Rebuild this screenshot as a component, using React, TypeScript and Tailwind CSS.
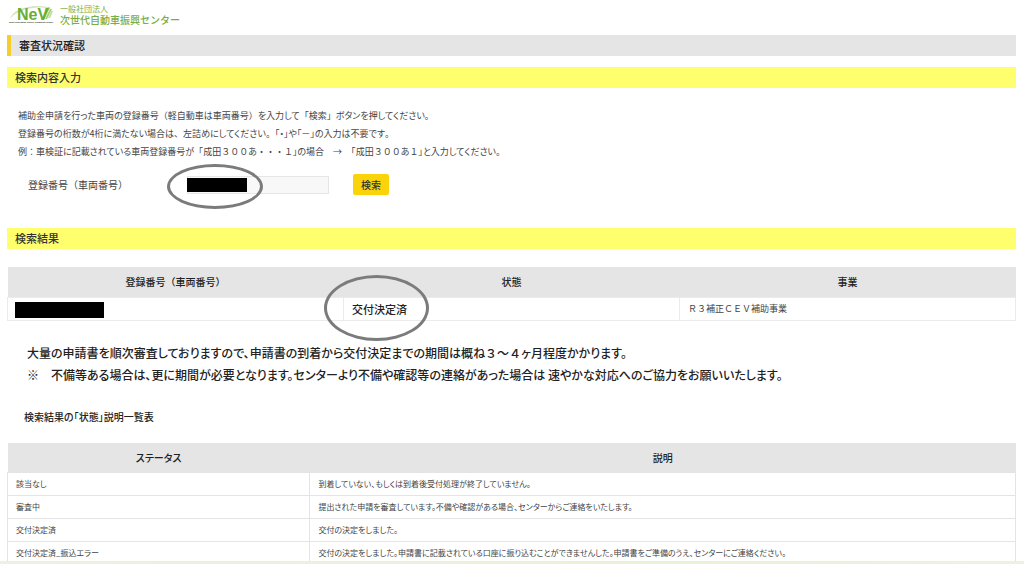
import { ReactNode } from 'react';
import { clsx } from 'clsx';

const results = [{ id: 1, status: '交付決定済', project: 'Ｒ３補正ＣＥＶ補助事業' }];

const statuses = [
    { name: '該当なし', description: '到着していない、もしくは到着後受付処理が終了していません。' },
    { name: '審査中', description: '提出された申請を審査しています。不備や確認がある場合、センターからご連絡をいたします。' },
    { name: '交付決定済', description: '交付の決定をしました。' },
    {
        name: '交付決定済_振込エラー',
        description: '交付の決定をしました。申請書に記載されている口座に振り込むことができませんした。申請書をご準備のうえ、センターにご連絡ください。',
    },
];

// Full-width digits and punctuation keep their full advance
function Wide({ children }: { children: ReactNode }) {
    return <span className="[font-feature-settings:normal]">{children}</span>;
}

function Logo() {
    return (
        <svg viewBox="0 0 48 20" className="h-5 w-12" aria-hidden="true">
            <path d="M2 15 C4 7 16 2 30 2 C36 2 41 3 44 5 C36 3 27 3 20 5 C11 7 6 10 2 15 Z" fill="#d3e6b8" />
            <path d="M33 15.5 L40 3.5 L42 3.5 L36 15.5 Z" fill="#8cbf3f" />
            <path d="M37 15 L42 5 L44 5 L39 15 Z" fill="#a5ce6e" />
            <path d="M40 14 L43.5 6.5 L45 7.5 L42 14 Z" fill="#c3df9d" />
            <text
                x="9"
                y="15.5"
                fontSize="16"
                fontWeight="700"
                fontFamily="Liberation Sans, sans-serif"
                fill="#68ad35"
            >
                NeV
            </text>
            <text x="1" y="19" fontSize="2.2" fontWeight="700" fontFamily="Liberation Sans, sans-serif" fill="#1c2a14">
                Next Generation Vehicle Promotion Center
            </text>
        </svg>
    );
}

function Ring({ className }: { className?: string }) {
    return (
        <span
            aria-hidden="true"
            className={clsx('pointer-events-none absolute z-10 rounded-[50%] border-[3px] border-[#7b7b7b]', className)}
        />
    );
}

function SectionTitle({ children }: { children: ReactNode }) {
    return (
        <h2 className="bg-[#ffff6e] px-2 text-[11px] leading-[21px] font-medium text-[#333]">{children}</h2>
    );
}

export default function App() {
    return (
        <div className="flex h-screen flex-col overflow-hidden bg-white font-['Noto_Sans_CJK_JP',sans-serif] text-[10px] text-[#444] [font-feature-settings:'palt']">
            <div className="min-h-0 flex-1 overflow-hidden pr-2 pl-[7px]">
                <header className="flex h-[35px] items-start gap-1 pt-1 pl-px">
                    <Logo />
                    <p className="flex flex-col text-[#79ae45] [font-feature-settings:normal]">
                        <span className="text-[8px] leading-[9px]">一般社団法人</span>
                        <span className="text-[10px] leading-[13px] font-medium">次世代自動車振興センター</span>
                    </p>
                </header>

                <h1 className="border-l-4 border-[#f5cf28] bg-[#e5e5e5] px-2 text-[11px] leading-[21px] font-medium text-[#222]">
                    審査状況確認
                </h1>

                <section className="mt-[11px]">
                    <SectionTitle>検索内容入力</SectionTitle>
                    <div className="mt-[19px] pl-[11px] text-[9px] leading-[18px]">
                        <p>
                            補助金申請を行った車両の登録番号<Wide>（</Wide>軽自動車は車両番号<Wide>）</Wide>を入力して<Wide>「</Wide>検索<Wide>」</Wide>ボタンを押してください<Wide>。</Wide>
                        </p>
                        <p>
                            登録番号の桁数が4桁に満たない場合は<Wide>、</Wide>左詰めにしてください<Wide>。</Wide>「・」や「<Wide>－</Wide>」の入力は不要です<Wide>。</Wide>
                        </p>
                        <p>
                            例<Wide>：</Wide>車検証に記載されている車両登録番号が<Wide>「</Wide>成田<Wide>３００</Wide>あ<Wide>・・・１</Wide>」の場合<Wide>　→　「</Wide>成田<Wide>３００</Wide>あ<Wide>１</Wide>」と入力してください<Wide>。</Wide>
                        </p>
                    </div>
                    <form className="mt-[13px] flex items-center pl-[21px]" onSubmit={(e) => e.preventDefault()}>
                        <label htmlFor="plate" className="w-[159px] [font-feature-settings:normal]">
                            登録番号（車両番号）
                        </label>
                        <div className="relative">
                            <input
                                id="plate"
                                type="text"
                                className="block h-[18px] w-[142px] border border-[#e6e6e6] bg-[#f8f8f8] px-1"
                            />
                            <span className="absolute top-[2px] left-0 h-[14px] w-[60px] bg-black" />
                            <Ring className="-top-3 -left-5 h-[45px] w-24" />
                        </div>
                        <button
                            type="submit"
                            className="ml-6 h-[21px] rounded-xs bg-[#fbd30b] px-2 font-medium text-[#333]"
                        >
                            検索
                        </button>
                    </form>
                </section>

                <section className="mt-[33px]">
                    <SectionTitle>検索結果</SectionTitle>
                    <table className="mt-[18px] w-full table-fixed border-collapse">
                        <thead>
                            <tr className="h-[30px] bg-[#e5e5e5] text-[#222]">
                                <th className="font-medium [font-feature-settings:normal]">登録番号（車両番号）</th>
                                <th className="font-medium">状態</th>
                                <th className="font-medium">事業</th>
                            </tr>
                        </thead>
                        <tbody>
                            {results.map((r) => (
                                <tr key={r.id} className="h-[23px]">
                                    <td className="border border-[#ebebeb] px-[7px]">
                                        <span className="mt-0.5 block h-4 w-[89px] bg-black" />
                                    </td>
                                    <td className="relative border border-[#ebebeb] px-2 text-[11px] leading-4 font-medium text-[#222]">
                                        {r.status}
                                        <Ring className="-top-[23px] -left-5 h-[66px] w-[105px]" />
                                    </td>
                                    <td className="border border-[#ebebeb] px-2 text-[9px] leading-3 [font-feature-settings:normal]">
                                        {r.project}
                                    </td>
                                </tr>
                            ))}
                        </tbody>
                    </table>
                    <div className="mt-[21px] pl-5 text-[12px] leading-[22px] font-medium text-[#222]">
                        <p>大量の申請書を順次審査しておりますので、申請書の到着から交付決定までの期間は概ね<Wide>３～４</Wide>ヶ月程度かかります。</p>
                        <p>
                            ※<Wide>　</Wide>不備等ある場合は、更に期間が必要となります。センターより不備や確認等の連絡があった場合は 速やかな対応へのご協力をお願いいたします。
                        </p>
                    </div>
                </section>

                <section className="mt-[21px]">
                    <h3 className="pl-[17px] leading-[20px] font-medium text-[#222]">検索結果の「状態」説明一覧表</h3>
                    <table className="mt-4 w-full table-fixed border-collapse">
                        <thead>
                            <tr className="h-[30px] bg-[#e5e5e5] text-[#222]">
                                <th className="w-3/10 font-medium">ステータス</th>
                                <th className="font-medium">説明</th>
                            </tr>
                        </thead>
                        <tbody>
                            {statuses.map((s) => (
                                <tr key={s.name} className="h-[23px] text-[8px] leading-3">
                                    <td className="border border-[#e4e4e4] px-2">{s.name}</td>
                                    <td className="border border-[#e4e4e4] px-2">{s.description}</td>
                                </tr>
                            ))}
                        </tbody>
                    </table>
                </section>
            </div>
            <div className="h-[3px] shrink-0 bg-linear-to-r from-[#f0efe2] via-[#e8f2d6] via-65% to-[#f1f0e0]" />
        </div>
    );
}
